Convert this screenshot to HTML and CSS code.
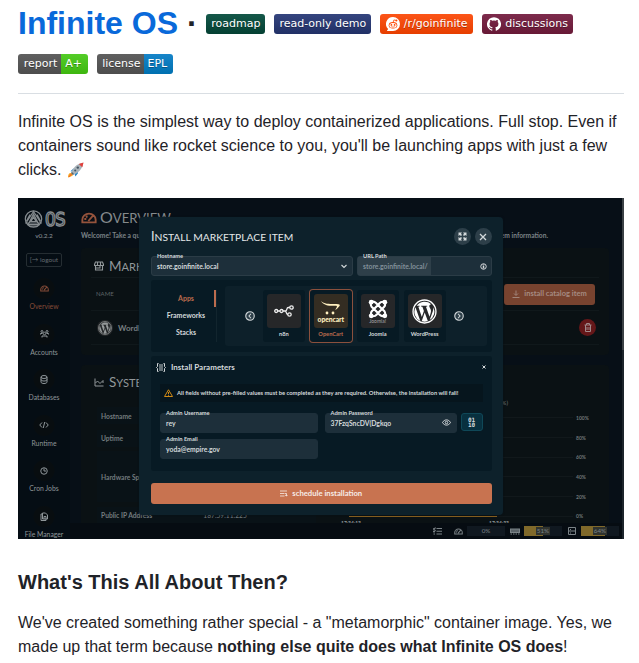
FILE: index.html
```html
<!DOCTYPE html>
<html lang="en">
<head>
<meta charset="utf-8">
<title>Infinite OS</title>
<link rel="stylesheet" href="styles.css">
</head>
<body>
<svg class="defs" width="0" height="0">
  <defs>
    <symbol id="gauge" viewBox="0 0 24 17"><path d="M2 15V11a10 9 0 0 1 20 0v4zM11 13l7-8M5 10h3M8 5l1 3" fill="none" stroke="currentColor" stroke-width="2.800"/></symbol>
    <symbol id="wp" viewBox="0 0 24 24"><circle cx="12" cy="12" r="11" fill="none" stroke="currentColor" stroke-width="1.300"/><path d="M3.300 8 8 21a9.500 9.500 0 0 1-4.700-13zM4.500 6.500A9.500 9.500 0 0 1 18.400 5c-2 .2-2.200 2-1.300 3.500 1.300 2 1.400 3.200.7 5.300l-1 3.200-3.400-9.500 1.200-.2v-.9H8.700v.9l1.300.2 1.400 4-2 5.700L6.100 7.500l1.200-.2v-.8zM12.200 13l3 8.200a9.500 9.500 0 0 1-5.900.1zM20.500 7.800A9.500 9.500 0 0 1 17 20.100l2.900-8.200c.6-1.700.7-2.800.6-4.100z" fill="currentColor"/></symbol>
  </defs>
</svg>
<main class="readme">
  <h1><a>Infinite OS</a> <span class="dot">·</span>
    <span class="badge road">roadmap</span>
    <span class="badge demo">read-only demo</span>
    <span class="badge reddit"><svg width="14" height="14" viewBox="0 0 14 14"><path fill="#fff" d="M7 0a7 7 0 1 1 0 14H.8l1.300-2A7 7 0 0 1 7 0z"/><ellipse cx="7" cy="8.200" rx="4.300" ry="3.200" fill="#ff4500"/><ellipse cx="7" cy="8.400" rx="3.600" ry="2.500" fill="#fff"/><path d="m7.200 5.200.7-2.300 2 .5" fill="none" stroke="#ff4500" stroke-width=".8"/><circle cx="10.400" cy="3.400" r="1" fill="#ff4500"/><circle cx="5.400" cy="7.900" r=".9" fill="#ff4500"/><circle cx="8.600" cy="7.900" r=".9" fill="#ff4500"/><path d="M5.300 9.700q1.700 1 3.400 0" fill="none" stroke="#ff4500" stroke-width=".7"/></svg>/r/goinfinite</span>
    <span class="badge disc"><svg width="14" height="14" viewBox="0 0 24 24" fill="#fff"><path d="M12 .3a12 12 0 0 0-3.800 23.400c.6.1.8-.3.800-.6v-2c-3.300.7-4-1.600-4-1.600-.6-1.400-1.400-1.800-1.400-1.800-1-.7.1-.7.1-.7 1.200 0 1.900 1.200 1.900 1.200 1 1.800 2.800 1.300 3.500 1 0-.8.400-1.300.7-1.600-2.700-.3-5.500-1.300-5.500-6 0-1.200.5-2.300 1.300-3.100-.2-.4-.6-1.600 0-3.200 0 0 1-.3 3.400 1.200a11.500 11.500 0 0 1 6 0c2.300-1.500 3.300-1.200 3.300-1.200.6 1.600.2 2.800 0 3.200.9.8 1.300 1.900 1.300 3.200 0 4.600-2.800 5.600-5.500 5.900.5.400.9 1 .9 2.200v3.300c0 .3.1.7.8.6A12 12 0 0 0 12 .3"/></svg>discussions</span>
    <br><span class="badge report"><i>report</i><b>A+</b></span>
    <span class="badge license"><i>license</i><b>EPL</b></span>
  </h1>
  <p>Infinite OS is the simplest way to deploy containerized applications. Full stop. Even if containers sound like rocket science to you, you'll be launching apps with just a few clicks. <svg class="rocket" width="16" height="16" viewBox="0 0 16 16"><path d="m2.500 9.200 3-2.700 1.800.6-2 2.600zM9.500 9l.5 2.300-2.600 3.200-1-3.300z" fill="#2587c9"/><path d="M0 15.500c0-3 1-4.800 3-4.600s2.300 1.600 1.600 2.700-1.600.7-1.800.9-1.300 1-2.800 1z" fill="#f6a623"/><path d="M1 14.800 3.500 12" stroke="#f04b2d"/><path d="M3.300 10.500C5 6 8.500 1.700 15.300.7 14.700 7 10 11 5.500 12.700z" fill="#aab4ba"/><path d="M3.500 10.500 5.500 12.500" stroke="#596770" stroke-width="1.500"/><path d="M10.800 2 15.500.5 14.300 5.300z" fill="#e23f3b"/><circle cx="9.800" cy="5.600" r="1.200" fill="#435463"/><circle cx="7.200" cy="8.400" r="1" fill="#435463"/></svg></p>

  <section class="app">
    <nav class="side">
      <div class="logo"><svg width="19" height="18" viewBox="0 0 19 18" fill="none" stroke="currentColor" stroke-width="1.200"><circle cx="9.500" cy="9" r="8.200"/><path d="M9.500 1.500 17 13H2zM9.500 4 14.800 14.500H4.200zM9.500 7l2.500 4.500H7zM6 4.500l-3.500 6.500M13 4.500l3.500 6.500M5 16h9"/></svg><b>OS</b></div>
      <div class="ver">v0.2.2</div>
      <div class="logout">[→ logout</div>
      <div class="nav-item on"><span><svg width="9" height="7"><use href="#gauge"/></svg></span>Overview</div>
      <div class="nav-item"><span><svg width="9" height="8" viewBox="0 0 18 16" fill="none" stroke="currentColor" stroke-width="2"><circle cx="4" cy="3" r="2"/><circle cx="14" cy="3" r="2"/><circle cx="9" cy="7" r="2.500"/><path d="M1 9V7h4M17 9V7h-4M4 15v-3h10v3"/></svg></span>Accounts</div>
      <div class="nav-item"><span><svg width="8" height="9" viewBox="0 0 16 18" fill="none" stroke="currentColor" stroke-width="2"><ellipse cx="8" cy="4" rx="6" ry="3"/><path d="M2 4v10c0 4 12 4 12 0V4M2 9c0 4 12 4 12 0"/></svg></span>Databases</div>
      <div class="nav-item"><span><svg width="10" height="8" viewBox="0 0 20 16" fill="none" stroke="currentColor" stroke-width="2"><path d="M6 3 1.500 8 6 13M14 3l4.500 5-4.500 5M11.500 2l-3 12"/></svg></span>Runtime</div>
      <div class="nav-item"><span><svg width="8" height="8" viewBox="0 0 16 16" fill="none" stroke="currentColor" stroke-width="2"><circle cx="8" cy="8" r="6.500"/><path d="M8 3v5h4"/></svg></span>Cron Jobs</div>
      <div class="nav-item"><span><svg width="8" height="9" viewBox="0 0 16 18" fill="none" stroke="currentColor" stroke-width="2"><path d="M5 2h6l4 4v8H5zM5 4H2v13h10v-3M8 14V9h4v5"/></svg></span>File Manager</div>
    </nav>
    <div class="stage">
      <div class="page">
        <h2 class="caps over"><svg width="16" height="12"><use href="#gauge"/></svg><span>O<small>VERVIEW</small></span></h2>
        <div class="welcome"><span>Welcome! Take a quick look at your system</span><span>em information.</span></div>
        <div class="card market">
          <h3 class="caps"><svg width="10" height="10" viewBox="0 0 20 20" fill="none" stroke="currentColor" stroke-width="2.200"><path d="M3 2h14l2 5v2H1V7zM3 9v9h14V9M3 14h9V9M7 3v6M13 3v6"/></svg><span>M<small>ARKETPLACE</small></span></h3>
          <div class="thead"><span>NAME</span><div class="install"><svg width="8" height="8" viewBox="0 0 16 16" fill="none" stroke="currentColor" stroke-width="1.800"><path d="M8 1v9M4 7l4 4 4-4M1 15h14"/></svg>install catalog item</div></div>
          <div class="trow"><em><svg width="14" height="14"><use href="#wp"/></svg></em><span>WordPress</span><div class="trash"><svg width="8" height="9" viewBox="0 0 16 18" fill="none" stroke="currentColor" stroke-width="2"><path d="M1 4h14M5 4V1h6v3M3 4v13h10V4M6 8v6M10 8v6"/></svg></div></div>
        </div>
        <div class="card system">
          <h3 class="caps"><svg width="10" height="9" viewBox="0 0 20 18" fill="none" stroke="currentColor" stroke-width="2"><path d="M2 1v15h17M3 10l4-4 5 5 6-6v5"/></svg><span>S<small>YSTEM</small></span></h3>
          <div class="sysgrid">
            <div class="facts"><div>Hostname</div><div>Uptime</div><div class="tall">Hardware Specs</div><div>Public IP Address<span>187.59.11.225</span></div></div>
            <div class="chart"><div class="ctitle">(%)</div><ul><li>100%</li><li>80%</li><li>60%</li><li>40%</li><li>20%</li><li>0%</li></ul><div class="times"><span>17:34:13</span><span>17:34:33</span></div></div>
          </div>
        </div>
      </div>
      <footer class="status">
        <svg class="tasks" width="9" height="8" viewBox="0 0 18 16" fill="none" stroke="currentColor" stroke-width="2.400"><path d="m0 3 2 2 3-4M7 3h11M0 8l2 2 3-4M7 8.500h11M1 14h3M7 14h11"/></svg>
        <svg class="g2" width="9" height="7"><use href="#gauge"/></svg><div class="meter m0"><span>0%</span></div>
        <svg class="g3" width="10" height="7" viewBox="0 0 20 14"><path d="M0 1h20v9H0zM1 11h3v2H1zM6 11h3v2H6zM11 11h3v2h-3zM16 11h3v2h-3z" fill="currentColor"/><path d="M4 3v5M8 3v5M12 3v5M16 3v5" stroke="#172129" stroke-width="1.300"/></svg><div class="meter m1"><span>51%</span></div>
        <svg class="g4" width="8" height="8" viewBox="0 0 16 16" fill="none" stroke="currentColor" stroke-width="2"><path d="M1 1h14v14H1zM1 8h14M4 5h2M4 12h2"/></svg><div class="meter m2"><span>64%</span></div>
      </footer>
    </div>
    <div class="scroll"></div>

    <div class="modal">
      <header><h2 class="caps"><span>I<small>NSTALL MARKETPLACE ITEM</small></span></h2>
        <div class="round"><svg width="9" height="9" viewBox="0 0 18 18" fill="currentColor"><path d="M1 1h7L6 3.500 8 6 6 8 3.500 6 1 8zM17 1v7l-2.500-2L12 8l-2-2 2-2.500L10 1zM1 17v-7l2.500 2L6 10l2 2-2 2.500L8 17zM17 17h-7l2-2.500-2-2.500 2-2 2.500 2 2.500-2z"/></svg></div>
        <div class="round"><svg width="8" height="8" viewBox="0 0 8 8" stroke="currentColor" stroke-width="1.300"><path d="m1 1 6 6M7 1 1 7"/></svg></div></header>
      <div class="top-fields">
        <div class="field host"><label>Hostname</label>store.goinfinite.local<svg width="6" height="5" viewBox="0 0 6 5" fill="none" stroke="currentColor" stroke-width="1.100"><path d="m.5 1 2.500 2.500L5.500 1"/></svg></div>
        <div class="field url"><label>URL Path</label><span>store.goinfinite.local/</span><svg width="7" height="7" viewBox="0 0 14 14" fill="none" stroke="currentColor" stroke-width="2"><circle cx="7" cy="7" r="5.500"/><path d="M7 3v2M7 6v5" stroke-width="3"/></svg></div>
      </div>
      <div class="panel catalog">
        <div class="tabs"><div class="on">Apps</div><div>Frameworks</div><div>Stacks</div></div>
        <div class="carousel">
          <svg class="arr" width="10" height="10" viewBox="0 0 20 20" fill="#2d3f49" stroke="currentColor" stroke-width="2.200"><circle cx="10" cy="10" r="8.500"/><path d="m12 5.500-4 4.500 4 4.500"/></svg>
          <div class="tile"><div><svg width="20" height="12" viewBox="0 0 20 12" fill="none" stroke="#eee" stroke-width="1.300"><circle cx="2.200" cy="6" r="1.500"/><circle cx="7.500" cy="6" r="1.500"/><circle cx="17.500" cy="2.500" r="1.700"/><circle cx="15.500" cy="9.500" r="1.700"/><path d="M3.700 6H6M9 6h2.500c2 0 .5-3.500 3-3.500h1.300M11 6c2 0 .5 3.500 3 3.500"/></svg></div>n8n</div>
          <div class="tile sel"><div class="oc"><svg width="21" height="16" viewBox="0 0 21 16"><path d="M1 1c3 3 8 3 13 3 8 0 7 1 1.500 6-.5-1 3.500-4.300 0-4.200C10 6 4 6 1 1z" fill="#fff0c0"/><circle cx="7" cy="13" r="1.400" fill="#fff0c0"/><circle cx="13" cy="13" r="1.400" fill="#fff0c0"/></svg><b>opencart</b></div>OpenCart</div>
          <div class="tile"><div class="jo"><svg width="20" height="20" viewBox="0 0 20 20" fill="none" stroke="#fff" stroke-width="2.200"><path d="M3 3c-1 5 1 5 3 7l6 6c2 2 5 1 5-1M17 3c-5-1-5 1-7 3l-6 6c-2 2-1 5 1 5M17 17c1-5-1-5-3-7L8 4C6 2 3 2 3 5M3 17c5 1 5-1 7-3l6-6c2-2 1-5-1-5"/><g fill="#fff" stroke="none"><circle cx="3.200" cy="3.200" r="2.400"/><circle cx="16.800" cy="3.200" r="2.400"/><circle cx="3.200" cy="16.800" r="2.400"/><circle cx="16.800" cy="16.800" r="2.400"/></g></svg><b>Joomla!</b></div>Joomla</div>
          <div class="tile"><div><svg width="25" height="25" color="#fff"><use href="#wp"/></svg></div>WordPress</div>
          <svg class="arr" width="10" height="10" viewBox="0 0 20 20" fill="#2d3f49" stroke="currentColor" stroke-width="2.200"><circle cx="10" cy="10" r="8.500"/><path d="m8 5.500 4 4.500-4 4.500"/></svg>
        </div>
      </div>
      <div class="panel params">
        <div class="ptitle"><svg width="10" height="9" viewBox="0 0 20 18" fill="none" stroke="currentColor" stroke-width="2"><path d="M5 1H3v6L1 9l2 2v6h2M15 1h2v6l2 2-2 2v6h-2"/><path d="M6 2h8v14H6z" fill="currentColor" fill-opacity=".45" stroke="none"/></svg><b>Install Parameters</b><svg width="4" height="4" viewBox="0 0 4 4" stroke="currentColor"><path d="m.5.5 3 3M3.500.5l-3 3"/></svg></div>
        <div class="warn"><svg width="9" height="8" viewBox="0 0 18 16" fill="none" stroke="#d08a16" stroke-width="2"><path d="M9 1.500 17 15H1zM9 6v4M9 11.500v2"/></svg><span>All fields without pre-filled values must be completed as they are required. Otherwise, the installation will fail!</span></div>
        <div class="form">
          <div class="field"><label>Admin Username</label>rey</div>
          <div class="field"><label>Admin Password</label>37FzqSncDV(Dgkqo<svg width="9" height="7" viewBox="0 0 18 14" fill="none" stroke="currentColor" stroke-width="2"><path d="M1 7c4-7 12-7 16 0-4 7-12 7-16 0z"/><circle cx="9" cy="7" r="2.500"/></svg></div>
          <div class="gen"><b>01<br>10</b></div>
          <div class="field"><label>Admin Email</label>yoda@empire.gov</div>
        </div>
      </div>
      <div class="submit"><svg width="8" height="7" viewBox="0 0 16 14" fill="none" stroke="currentColor" stroke-width="1.600"><path d="M0 2h14M0 7h9M0 12h9M10 7h3v5M10 10l3 2 2-2"/></svg>schedule installation</div>
    </div>
  </section>

  <h2 class="about">What's This All About Then?</h2>
  <p>We've created something rather special - a "metamorphic" container image. Yes, we made up that term because <strong>nothing else quite does what Infinite OS does</strong>!</p>
</main>
</body>
</html>
```
FILE: styles.css
```css
* { box-sizing: border-box; }
html { overflow: hidden; }
body { margin: 0; height: 663px; overflow: hidden; background: #fff; color: #1f2328; font: 16px/24px "Liberation Sans", Arial, sans-serif; }
.defs { display: block; height: 0; }
.readme { width: 606px; margin-left: 18px; }
h1, h2, h3, p, ul { margin: 0; padding: 0; }
.readme > h1 { font-size: 32px; line-height: 40px; height: 94px; padding-top: 3px; border-bottom: 1px solid #d9dee3; margin-bottom: 16px; white-space: nowrap; }
h1 a { color: #0969da; }
.readme > p { margin-bottom: 16px; }
.badge { display: inline-flex; align-items: center; height: 20px; margin-top: 11px; border-radius: 3px; vertical-align: top; overflow: hidden; color: #fff; font: 11px/20px "DejaVu Sans", sans-serif; text-shadow: 0 1px rgba(1,1,1,.3); justify-content: center; }
.road { width: 59px; background: linear-gradient(#15584a, #044032); }
.demo { width: 97px; background: linear-gradient(#35457f, #213066); }
.reddit { width: 93px; gap: 4px; background: linear-gradient(#fc5518, #e63e00); }
.disc { width: 91px; gap: 4px; background: linear-gradient(#7d2b4c, #671936); }
.badge i, .badge b { font-style: normal; font-weight: normal; text-align: center; }
.badge i { background: linear-gradient(#606060, #4d4d4d); }
.report i { width: 43px; padding-left: 2px; } .report b { width: 27px; padding-right: 2px; background: linear-gradient(#54cd28, #3eb60f); }
.license i { width: 47px; padding-left: 2px; } .license b { width: 29px; padding-right: 2px; background: linear-gradient(#1785c9, #0070b0); }
.rocket { vertical-align: -3px; margin-left: 2px; }

.app { position: relative; display: flex; width: 606px; height: 341px; overflow: hidden; background: #070f17; font: 7px/10px Lato, sans-serif; color: #8f9699; }
.app svg { flex: none; }
.side { width: 52px; background: #050d14; display: flex; flex-direction: column; align-items: center; padding-top: 12px; }
.side > * { flex: none; }
.logo { display: flex; align-items: center; gap: 2px; width: 40px; height: 18px; color: #858b8f; }
.logo b { font: 19px/18px "DejaVu Sans Mono", monospace; letter-spacing: -1px; transform: scaleX(.95); transform-origin: left; color: #0c141a; -webkit-text-stroke: 1.300px #858b8f; }
.ver { height: 15px; line-height: 15px; font-size: 6.500px; }
.logout { width: 36px; height: 14px; margin: 10px 0 9px; border: 1px solid #252d32; border-radius: 2px; font-size: 6.500px; line-height: 12px; text-align: center; color: #626a6e; }
.nav-item { height: 45.500px; display: flex; flex-direction: column; align-items: center; white-space: nowrap; font-size: 6.800px; line-height: 10px; }
.nav-item span { display: flex; width: 22px; height: 25px; align-items: center; justify-content: center; background: radial-gradient(circle, #080d10 10px, transparent 11px); }
.nav-item.on { color: #864c38; }
.stage { width: 552px; display: flex; flex-direction: column; }
.page { height: 325px; overflow: hidden; padding: 9px 13px 0 11px; }
.caps { font-weight: normal; font-family: Lato, sans-serif; display: flex; align-items: center; white-space: nowrap; }
.caps small { font-size: .82em; }
.over { font-size: 16px; line-height: 18px; gap: 3px; height: 21px; color: #858a8c; }
.over svg { color: #95533c; }
.welcome { display: flex; justify-content: space-between; padding-right: 61px; height: 14px; line-height: 14px; font-size: 6.700px; font-weight: bold; color: #7b8387; }
.card { background: #0a1114; border-radius: 4px; padding: 0 10px; }
.market { height: 107px; margin: 6px 0 10px; }
.card h3 { font-size: 13.500px; line-height: 16px; gap: 5px; padding: 7px 0 0 3px; color: #92989a; }
.market h3 { height: 29px; align-items: center; padding-bottom: 0; }
.thead { display: flex; align-items: center; height: 34px; border: 1px solid #10181b; border-width: 1px 0; padding: 0 4px 0 5px; justify-content: space-between; font-size: 6px; color: #5d6467; }
.install { width: 91px; height: 21px; border-radius: 3px; background: #78432f; color: #a58b82; display: flex; align-items: center; justify-content: center; gap: 4px; font-size: 7.500px; font-weight: bold; }
.trow { display: flex; align-items: center; height: 34px; padding: 0 3px 0 6px; border-bottom: 1px solid #10181b; gap: 5px; font-size: 8px; font-weight: bold; color: #767d80; }
.trow em { display: flex; width: 16px; height: 16px; border-radius: 50%; align-items: center; justify-content: center; background: #25282a; color: #969a9b; }
.trash { margin-left: auto; width: 17px; height: 17px; border-radius: 50%; background: #641719; display: flex; align-items: center; justify-content: center; color: #9f898a; }
.system { height: 170px; }
.system h3 { height: 28px; padding-top: 6px; }
.sysgrid { display: flex; margin: 14px 6px 0; }
.facts { width: 220px; display: flex; flex-direction: column; gap: 5.500px; font-size: 6.700px; font-weight: bold; color: #737b7e; }
.facts div { flex: none; height: 17px; display: flex; align-items: center; padding-left: 4px; background: #091217; }
.facts .tall { height: 51px; margin-top: -1px; margin-bottom: -1px; }
.facts span { margin-left: 51px; font-weight: normal; }
.chart { flex: 1; font-size: 5px; line-height: 6px; color: #70777a; padding: 0 0 0 22px; margin-top: -7px; }
.ctitle { height: 8px; padding-left: 162px; font-size: 6px; }
.chart ul { list-style: none; width: 255px; }
.chart li { height: 19.700px; display: flex; align-items: center; gap: 3px; font-weight: bold; }
.chart li::before { content: ""; width: 235px; height: 1px; background: #11181b; }
.chart li:last-child::before { background: linear-gradient(90deg, #0a1114 0 11px, #8b6220 0 159px, #11181b 0); }
.times { display: flex; justify-content: space-between; width: 168px; margin: -6px 0 0 3px; color: #92989a; font-weight: bold; }
.status { height: 16px; display: flex; align-items: center; background: #060c12; color: #7b8387; padding-left: 363px; }
.meter { width: 38px; height: 10px; display: flex; align-items: center; justify-content: center; font-size: 6.300px; background: #101820; }
.meter span { padding: 0 1px; line-height: 8px; }
.g2 { margin: 0 4px 0 12px; } .g3 { margin: 0 4px 0 5px; } .g4 { margin: 0 5px 0 6px; }
.m1 { background: linear-gradient(90deg, #80692a 51%, #101820 0); } .m2 { background: linear-gradient(90deg, #80692a 64%, #101820 0); }
.m1 span, .m2 span { background: #30332e; }
.scroll { width: 2px; background: linear-gradient(#3b4145 0 152px, #1c242b 0); }

.modal { position: absolute; left: 121px; top: 19px; width: 364px; height: 298px; padding: 9px 11.500px 0 12px; border-radius: 4px; background: #0d212b; color: #d4d9db; box-shadow: 0 0 2px #071018; }
.modal header { display: flex; align-items: center; height: 21px; gap: 4px; }
.modal header h2 { flex: 1; font-size: 12.600px; color: #e4e8e9; }
.modal header h2 small { font-size: 10.300px; }
.round { width: 17px; height: 17px; border-radius: 50%; background: #2d3f49; display: flex; align-items: center; justify-content: center; }
.top-fields { display: flex; gap: 4px; margin-top: 9px; }
.field { position: relative; height: 20px; border: 1px solid #2b3c46; border-radius: 3px; background: #1d2f3a; padding: 0 5px; display: flex; align-items: center; justify-content: space-between; font-size: 6.800px; font-weight: bold; white-space: nowrap; }
.field label { position: absolute; left: 5px; top: -5px; font-size: 5.700px; line-height: 8px; }
.host { width: 202px; } .url { width: 134.500px; padding-left: 0; padding-right: 4px; }
.url span { width: 73px; height: 18px; line-height: 19px; padding-left: 5px; background: #2e3f49; color: #82909a; }
.panel { background: #071a24; border-radius: 3px; }
.catalog { height: 72px; margin-top: 4px; display: flex; padding: 6px 5px 6px 5px; }
.tabs { width: 61px; margin-top: 4px; height: 52px; border-right: 1px solid #12252e; font-size: 7px; font-weight: bold; text-align: center; }
.tabs div { height: 17px; line-height: 17px; }
.tabs .on { color: #bc6c4e; border-right: 2px solid #bc6c4e; padding-left: 2px; }
.carousel { flex: 1; margin-left: 8px; background: #0d202a; border-radius: 3px; display: flex; align-items: center; padding: 0 22px 0 20px; justify-content: space-between; }
.tile { width: 42px; height: 52px; border-radius: 3px; background: #071a24; padding-top: 4px; display: flex; flex-direction: column; align-items: center; font-size: 5.700px; font-weight: bold; line-height: 12px; margin-right: -3px; margin-left: -4px; }
.tile > div { width: 34px; height: 34px; border-radius: 3px; background: #262729; display: flex; flex-direction: column; align-items: center; justify-content: center; }
.tile.sel { box-shadow: 0 0 0 1px #8b503d; color: #bc6c4e; }
.tile > .oc { background: #342d22; color: #fff0c0; }
.oc b { font: 900 6.800px/7px Lato, sans-serif; letter-spacing: -.1px; }
.jo b { font: 5px/5px Lato, sans-serif; color: #aaa; }
.params { height: 115px; margin-top: 4px; padding: 0 9px; }
.ptitle { height: 22px; display: flex; align-items: center; margin: 0 -4px; gap: 5px; font-size: 8px; }
.ptitle svg:last-child { margin-right: 1px; }
.ptitle b { flex: 1; }
.warn { margin-top: 6px; height: 18px; background: #06151d; display: flex; align-items: center; padding-left: 4px; gap: 4px; font-size: 5.800px; font-weight: bold; white-space: nowrap; }
.form { display: grid; grid-template-columns: 161px 132.500px 22px; grid-auto-rows: 19px; column-gap: 3.500px; row-gap: 7px; margin-top: 10.500px; }
.form .field { border-color: #1d2f3a; }
.form .field:first-child, .form .field:last-child { margin-right: 3.500px; }
.gen { height: 18px; border: 1px solid #0f4858; border-radius: 3px; background: #08303f; display: flex; align-items: center; justify-content: center; }
.gen b { font: bold 6px/5px "DejaVu Sans Mono", monospace; }
.submit { height: 21px; margin-top: 11.500px; background: #c87350; border-radius: 3px; display: flex; align-items: center; justify-content: center; gap: 4px; color: #f6ece7; font-size: 7.700px; font-weight: bold; }
.about { font-size: 20px; line-height: 25px; margin: 31px 0 16px; }
```
